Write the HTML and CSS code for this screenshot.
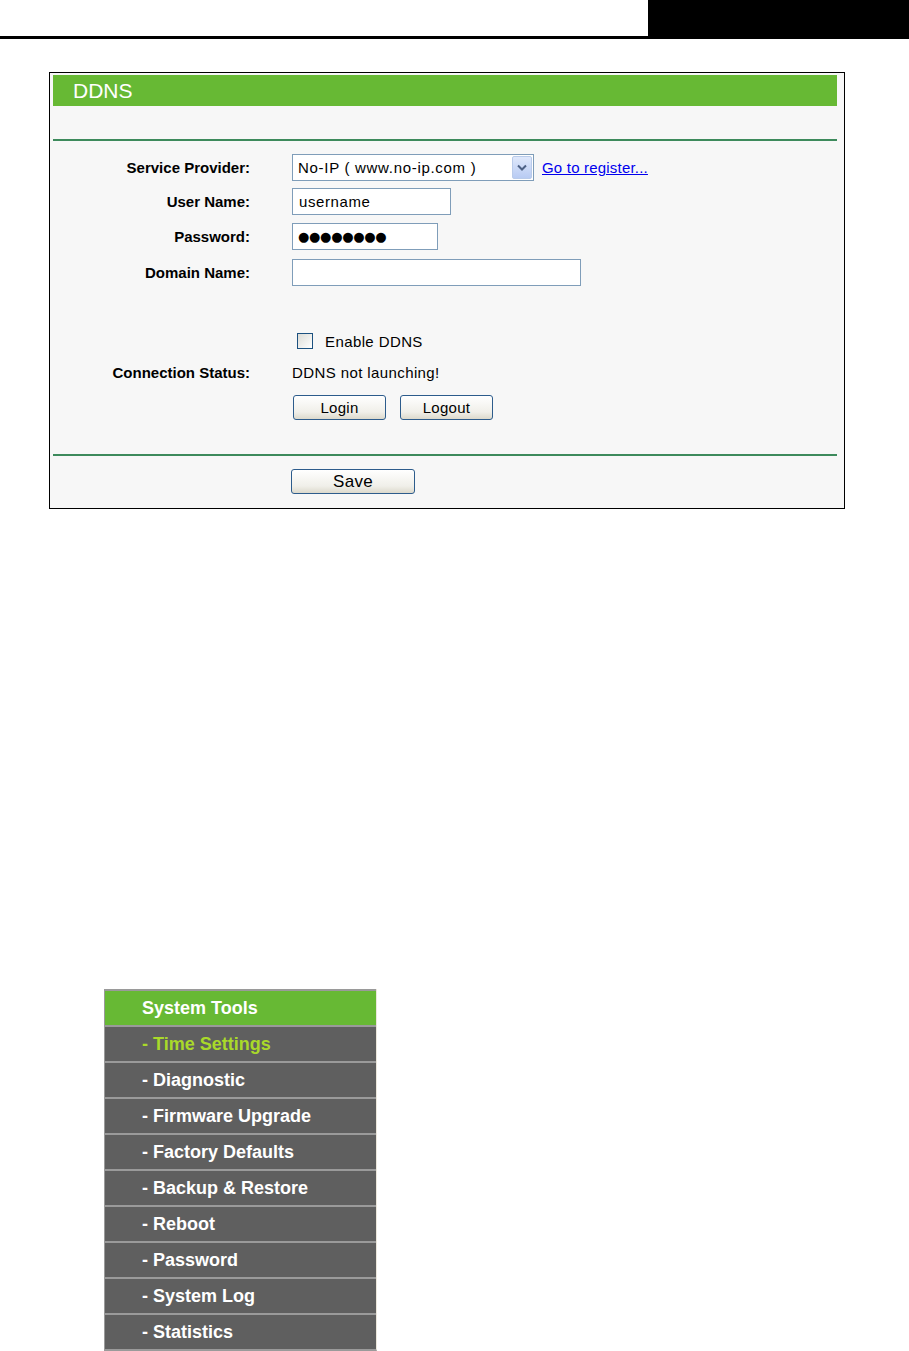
FILE: index.html
```html
<!DOCTYPE html>
<html>
<head>
<meta charset="utf-8">
<link rel="stylesheet" href="styles.css">
</head>
<body>
<div class="topbar">
  <div class="topline"></div>
  <div class="topblock"></div>
</div>

<div class="panel">
  <div class="title">DDNS</div>
  <div class="sep sep-top"></div>
  <div class="form">
    <div class="row r34">
      <div class="label">Service Provider:</div>
      <div class="field">
        <div class="select">
          <span class="select-text">No-IP ( www.no-ip.com )</span>
          <span class="select-btn">
            <svg width="10" height="7" viewBox="0 0 10 7"><path d="M1 1.5 L5 5.5 L9 1.5" fill="none" stroke="#4d6185" stroke-width="2"/></svg>
          </span>
        </div>
        <a class="link" href="#">Go to register...</a>
      </div>
    </div>
    <div class="row r34">
      <div class="label">User Name:</div>
      <div class="field"><div class="input w159">username</div></div>
    </div>
    <div class="row r36">
      <div class="label">Password:</div>
      <div class="field"><div class="input w146 dots">●●●●●●●●</div></div>
    </div>
    <div class="row r36">
      <div class="label">Domain Name:</div>
      <div class="field"><div class="input w289"></div></div>
    </div>
    <div class="row r34 gap-before">
      <div class="label"></div>
      <div class="field"><span class="checkbox"></span><span class="text">Enable DDNS</span></div>
    </div>
    <div class="row r28">
      <div class="label">Connection Status:</div>
      <div class="field"><span class="text status">DDNS not launching!</span></div>
    </div>
    <div class="row r34 btnrow">
      <div class="label"></div>
      <div class="field buttons"><span class="button">Login</span><span class="button">Logout</span></div>
    </div>
  </div>
  <div class="sep sep-bottom"></div>
  <div class="saverow">
    <span class="button save">Save</span>
  </div>
</div>

<nav class="menu">
  <div class="item head">System Tools</div>
  <div class="item active">- Time Settings</div>
  <div class="item">- Diagnostic</div>
  <div class="item">- Firmware Upgrade</div>
  <div class="item">- Factory Defaults</div>
  <div class="item">- Backup &amp; Restore</div>
  <div class="item">- Reboot</div>
  <div class="item">- Password</div>
  <div class="item">- System Log</div>
  <div class="item">- Statistics</div>
</nav>
</body>
</html>
```

FILE: styles.css
```css
html, body {
  margin: 0;
  padding: 0;
  background: #ffffff;
}
body {
  width: 909px;
  height: 1351px;
  overflow: hidden;
  font-family: "Liberation Sans", Arial, sans-serif;
}

.topbar {
  display: flex;
  height: 39px;
}
.topline {
  flex: 0 0 648px;
  border-bottom: 3px solid #000;
  box-sizing: border-box;
}
.topblock {
  flex: 1;
  background: #000;
}

.panel {
  margin: 33px 0 0 49px;
  width: 796px;
  box-sizing: border-box;
  border: 1px solid #000;
  padding: 2px 7px 0 3px;
  background: #f7f7f7;
}
.title {
  height: 31px;
  background: #67b934;
  color: #fff;
  font-size: 21px;
  line-height: 31px;
  padding-left: 20px;
}
.sep {
  height: 2px;
  background: #3d8a5c;
}
.sep-top { margin-top: 33px; }
.form { padding-top: 9px; }

.row {
  display: grid;
  grid-template-columns: 197px 1fr;
  column-gap: 42px;
  align-items: center;
}
.r34 { height: 34px; }
.r36 { height: 36px; }
.r28 { height: 28px; }
.gap-before { margin-top: 34px; }
.btnrow { margin-top: 4px; }

.label {
  text-align: right;
  font-weight: bold;
  font-size: 15px;
  color: #000;
}
.field {
  display: flex;
  align-items: center;
  font-size: 15px;
}

.select {
  width: 242px;
  height: 27px;
  box-sizing: border-box;
  border: 1px solid #7f9db9;
  background: #fff;
  display: flex;
  align-items: center;
  justify-content: space-between;
  padding: 0 1px 0 5px;
}
.select-text {
  font-size: 15px;
  letter-spacing: 0.7px;
  color: #000;
}
.select-btn {
  width: 20px;
  height: 23px;
  box-sizing: border-box;
  border: 1px solid #b9cbea;
  border-radius: 2px;
  background: linear-gradient(#dfe8fb, #b8cbf3);
  display: flex;
  align-items: center;
  justify-content: center;
}
.link {
  margin-left: 8px;
  color: #0000ee;
  font-size: 15px;
  letter-spacing: 0.2px;
  text-decoration: underline;
}

.input {
  height: 27px;
  box-sizing: border-box;
  border: 1px solid #7f9db9;
  background: #fff;
  padding-left: 6px;
  font-size: 15px;
  letter-spacing: 0.6px;
  line-height: 25px;
  color: #000;
}
.w159 { width: 159px; }
.w146 { width: 146px; }
.w289 { width: 289px; }
.dots {
  font-family: "DejaVu Sans", sans-serif;
  font-size: 13px;
  letter-spacing: -0.3px;
  padding-left: 5px;
}

.checkbox {
  width: 16px;
  height: 16px;
  box-sizing: border-box;
  margin-left: 5px;
  border: 1px solid #1c5180;
  background: linear-gradient(135deg, #dcdcd6, #ffffff);
}
.text {
  font-size: 15px;
  letter-spacing: 0.4px;
  color: #000;
}
.checkbox + .text { margin-left: 12px; }

.buttons { gap: 14px; padding-left: 1px; }
.button {
  display: inline-flex;
  align-items: center;
  justify-content: center;
  width: 93px;
  height: 25px;
  box-sizing: border-box;
  border: 1px solid #2d5c8c;
  border-radius: 3px;
  background: linear-gradient(#ffffff, #f0efe9 70%, #dcd9cc);
  font-size: 15px;
  letter-spacing: 0.3px;
  color: #000;
}

.sep-bottom { margin-top: 30px; }
.saverow {
  padding: 13px 0 14px 238px;
  display: flex;
}
.save { width: 124px; font-size: 17px; }

.menu {
  margin: 480px 0 0 104px;
  width: 273px;
  box-sizing: border-box;
  border-left: 1px solid #9a9a9a;
  border-right: 1px solid #ebe7dc;
  border-bottom: 2px solid #9a9a9a;
}
.item {
  height: 34px;
  border-top: 2px solid #9a9a9a;
  background: #5f5f5f;
  color: #ffffff;
  font-weight: bold;
  font-size: 18px;
  line-height: 34px;
  padding-left: 37px;
}
.item.head { background: #67b934; }
.item.active { color: #a9d92a; }
```
